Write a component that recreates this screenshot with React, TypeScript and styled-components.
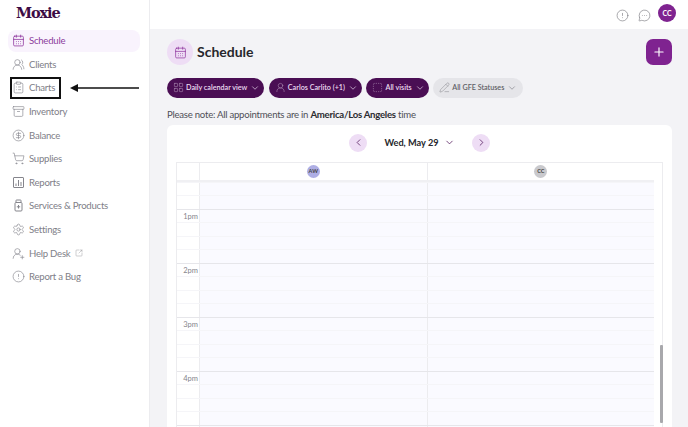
import React from "react";
import styled, { createGlobalStyle } from "styled-components";
import {
  Archive,
  CalendarDays,
  ChevronDown,
  ChevronLeft,
  ChevronRight,
  CircleAlert,
  CircleDollarSign,
  ClipboardList,
  LayoutGrid,
  MessageCircleMore,
  PencilLine,
  Plus,
  Settings,
  ShoppingCart,
  SquareArrowOutUpRight,
  SquareDashed,
  UserRound,
  UserRoundPlus,
  UsersRound,
} from "lucide-react";

const GlobalStyle = createGlobalStyle`
  * { box-sizing: border-box; }
  html, body { margin: 0; padding: 0; height: 100%; }
  body {
    font-family: "Lato", "Open Sans", sans-serif;
    background: #f3f3f6;
    overflow: hidden;
  }
`;

const Page = styled.div`
  position: relative;
  display: flex;
  width: 688px;
  height: 427px;
  overflow: hidden;
`;

const Sidebar = styled.aside`
  width: 150px;
  flex: none;
  background: #fff;
  border-right: 1px solid #ececef;
  padding: 5px 9px 0 8px;
`;

const Logo = styled.div`
  height: 25px;
  padding-left: 8px;
  font-family: "DejaVu Serif", serif;
  font-weight: 700;
  font-size: 14.5px;
  line-height: 15px;
  letter-spacing: -1.1px;
  color: #3d0c45;
`;

const NavList = styled.nav`
  display: flex;
  flex-direction: column;
  gap: 2px;
`;

const NavItem = styled.div<{ $active?: boolean }>`
  display: flex;
  align-items: center;
  gap: 4px;
  height: 21.6px;
  padding-left: 4px;
  border-radius: 8px;
  font-size: 9.6px;
  letter-spacing: -0.25px;
  background: ${(p) => (p.$active ? "#f9f3fd" : "transparent")};
  color: ${(p) => (p.$active ? "#8b3d9c" : "#808088")};
  svg {
    flex: none;
    color: ${(p) => (p.$active ? "#8b2e9b" : "#85858c")};
  }
`;

const LinkMark = styled.span`
  display: inline-flex;
  margin-left: 1px;
  color: #aaaab0;
`;

const HighlightBox = styled.div`
  position: absolute;
  left: 10px;
  top: 77px;
  width: 51px;
  height: 22px;
  border: 2px solid #111;
`;

const Arrow = styled.svg`
  position: absolute;
  left: 68px;
  top: 83px;
`;

const Main = styled.main`
  flex: 1;
  min-width: 0;
  display: flex;
  flex-direction: column;
`;

const TopBar = styled.header`
  height: 29px;
  flex: none;
  background: #fff;
  display: flex;
  align-items: center;
  gap: 9px;
  padding: 0 12px 0 0;
  justify-content: flex-end;
  color: #6f6f76;
`;

const Avatar = styled.div`
  width: 18px;
  height: 18px;
  margin-top: -3px;
  margin-left: -1.5px;
  border-radius: 50%;
  background: #7f2390;
  color: #fff;
  font-size: 7px;
  font-weight: 700;
  display: flex;
  align-items: center;
  justify-content: center;
`;

const TopIcon = styled.span`
  display: inline-flex;
  margin-top: 1px;
`;

const Content = styled.div`
  flex: 1;
  min-height: 0;
  padding: 10px 16px 0 17px;
  display: flex;
  flex-direction: column;
`;

const TitleRow = styled.div`
  display: flex;
  align-items: center;
  gap: 4px;
  height: 26px;
`;

const TitleBadge = styled.div`
  width: 26px;
  height: 26px;
  border-radius: 50%;
  background: #eeddf5;
  color: #8b2e9b;
  display: flex;
  align-items: center;
  justify-content: center;
`;

const Title = styled.h1`
  flex: 1;
  margin: 0 0 2px;
  font-size: 14px;
  font-weight: 700;
  color: #27272c;
`;

const AddButton = styled.button`
  width: 26px;
  height: 26px;
  padding: 0;
  border: 0;
  border-radius: 7px;
  background: #7f2390;
  color: #fff;
  display: flex;
  align-items: center;
  justify-content: center;
`;

const Filters = styled.div`
  display: flex;
  gap: 4.5px;
  margin-top: 12.5px;
`;

const Chip = styled.div<{ $muted?: boolean }>`
  height: 20px;
  display: flex;
  align-items: center;
  gap: 2px;
  padding: 0 ${(p) => (p.$muted ? "6px" : "4px")} 0 6px;
  border-radius: 10px;
  font-size: 7.2px;
  font-weight: 600;
  white-space: nowrap;
  background: ${(p) => (p.$muted ? "#e5e5e9" : "#4a0e54")};
  color: ${(p) => (p.$muted ? "#5f5f66" : "#ecdcf0")};
  svg:first-child {
    opacity: 0.7;
  }
  svg:last-child {
    margin-left: 1px;
  }
`;

const Note = styled.p`
  margin: 10px 0 0;
  height: 13px;
  font-size: 9.6px;
  letter-spacing: -0.25px;
  line-height: 13px;
  color: #4f4f56;
  b {
    color: #2b2b30;
    font-weight: 700;
  }
`;

const Card = styled.section`
  position: relative;
  flex: 1;
  min-height: 0;
  margin-top: 4px;
  background: #fff;
  border-radius: 6px 6px 0 0;
  padding: 6px 9px 0;
  overflow: hidden;
`;

const DateBar = styled.div`
  height: 24px;
  display: flex;
  align-items: center;
  justify-content: center;
  margin-bottom: 7px;
`;

const RoundNav = styled.button`
  width: 18px;
  height: 18px;
  padding: 0;
  border: 0;
  border-radius: 50%;
  background: #eeddf5;
  color: #4a0e54;
  display: flex;
  align-items: center;
  justify-content: center;
`;

const DateLabel = styled.div`
  width: 105px;
  display: flex;
  align-items: center;
  justify-content: center;
  gap: 5px;
  font-size: 9.2px;
  font-weight: 700;
  color: #27272c;
  svg {
    color: #4a0e54;
  }
`;

const Calendar = styled.div`
  width: 487px;
  border: 1px solid #ececef;
  border-bottom: 0;
`;

const HeaderRow = styled.div`
  display: grid;
  grid-template-columns: 22px 227.5px 227.5px;
  width: 477px;
  height: 19px;
  border-bottom: 2px solid #f0f0f3;
`;

const HeaderCell = styled.div`
  display: flex;
  align-items: center;
  justify-content: center;
  border-left: 1px solid #ececef;
  &:first-child {
    border-left: 0;
  }
`;

const Initials = styled.div<{ $bg: string }>`
  width: 13px;
  height: 13px;
  border-radius: 50%;
  background: ${(p) => p.$bg};
  color: #444;
  font-size: 5.5px;
  font-weight: 700;
  display: flex;
  align-items: center;
  justify-content: center;
`;

const Slot = styled.div<{ $hour?: boolean }>`
  display: grid;
  grid-template-columns: 22px 227.5px 227.5px;
  width: 477px;
  height: 13.5px;
  border-top: 1px solid ${(p) => (p.$hour ? "#e6e6ea" : "#f5f5f8")};
`;

const TimeCell = styled.div`
  font-size: 7.5px;
  line-height: 11px;
  padding-top: 1px;
  color: #85858c;
  text-align: right;
  padding-right: 1px;
  white-space: nowrap;
`;

const DayCell = styled.div`
  background: #fafaff;
  border-left: 1px solid #ececef;
`;

const ScrollThumb = styled.div`
  position: absolute;
  left: 493px;
  top: 220px;
  width: 3px;
  height: 78px;
  background: #a8a8ac;
  border-radius: 1px;
`;

const navItems = [
  { label: "Schedule", icon: <CalendarDays size={13} strokeWidth={1.4} />, active: true },
  { label: "Clients", icon: <UsersRound size={13} strokeWidth={1.2} /> },
  { label: "Charts", icon: <ClipboardList size={13} strokeWidth={1.2} /> },
  { label: "Inventory", icon: <Archive size={13} strokeWidth={1.2} /> },
  { label: "Balance", icon: <CircleDollarSign size={13} strokeWidth={1.2} /> },
  { label: "Supplies", icon: <ShoppingCart size={13} strokeWidth={1.2} /> },
  { label: "Reports", icon: <ReportsIcon /> },
  { label: "Services & Products", icon: <BottleIcon /> },
  { label: "Settings", icon: <Settings size={13} strokeWidth={1.2} /> },
  { label: "Help Desk", icon: <UserRoundPlus size={13} strokeWidth={1.2} />, external: true },
  { label: "Report a Bug", icon: <CircleAlert size={13} strokeWidth={1.2} /> },
];

function ReportsIcon() {
  return (
    <svg width="13" height="13" viewBox="0 0 13 13" fill="none" stroke="currentColor" strokeWidth="1">
      <rect x="1.5" y="1.5" width="10" height="10" rx="0.5" />
      <path d="M4 10V7.5M6.5 10V4M9 10V6" />
    </svg>
  );
}

function BottleIcon() {
  return (
    <svg width="13" height="13" viewBox="0 0 13 13" fill="none" stroke="currentColor" strokeWidth="1">
      <rect x="4" y="1" width="5" height="2.5" rx="0.5" />
      <rect x="3" y="3.5" width="7" height="8.5" rx="1" />
      <path d="M6.5 6v3.5M4.8 7.8h3.4" />
    </svg>
  );
}

// first row starts mid-hour, the 1pm line comes after two slots
const slots: { label?: string; hour?: boolean }[] = [];
slots.push({}, {});
["1pm", "2pm", "3pm", "4pm"].forEach((label) => {
  slots.push({ label, hour: true }, {}, {}, {});
});
slots.push({ hour: true });

export default function App() {
  return (
    <Page>
      <GlobalStyle />
      <Sidebar>
        <Logo>Moxie</Logo>
        <NavList>
          {navItems.map((item) => (
            <NavItem key={item.label} $active={item.active}>
              {item.icon}
              <span>{item.label}</span>
              {item.external && (
                <LinkMark>
                  <SquareArrowOutUpRight size={8} strokeWidth={1.2} />
                </LinkMark>
              )}
            </NavItem>
          ))}
        </NavList>
      </Sidebar>
      <HighlightBox />
      <Arrow width="72" height="10" viewBox="0 0 72 10">
        <path d="M2 5L10 1V9Z" fill="#111" />
        <path d="M8 5H71" stroke="#111" strokeWidth="1.5" />
      </Arrow>
      <Main>
        <TopBar>
          <TopIcon>
            <CircleAlert size={13} strokeWidth={1.1} />
          </TopIcon>
          <TopIcon>
            <MessageCircleMore size={13} strokeWidth={1.1} />
          </TopIcon>
          <Avatar>CC</Avatar>
        </TopBar>
        <Content>
          <TitleRow>
            <TitleBadge>
              <CalendarDays size={13} strokeWidth={1.3} />
            </TitleBadge>
            <Title>Schedule</Title>
            <AddButton>
              <Plus size={14} strokeWidth={2} />
            </AddButton>
          </TitleRow>
          <Filters>
            <Chip>
              <LayoutGrid size={11} strokeWidth={1.1} />
              Daily calendar view
              <ChevronDown size={10} strokeWidth={1.6} />
            </Chip>
            <Chip>
              <UserRound size={11} strokeWidth={1.1} />
              Carlos Carlito (+1)
              <ChevronDown size={10} strokeWidth={1.6} />
            </Chip>
            <Chip>
              <SquareDashed size={11} strokeWidth={1.1} />
              All visits
              <ChevronDown size={10} strokeWidth={1.6} />
            </Chip>
            <Chip $muted>
              <PencilLine size={11} strokeWidth={1.1} />
              All GFE Statuses
              <ChevronDown size={10} strokeWidth={1.2} />
            </Chip>
          </Filters>
          <Note>
            Please note: All appointments are in <b>America/Los Angeles</b> time
          </Note>
          <Card>
            <DateBar>
              <RoundNav>
                <ChevronLeft size={11} strokeWidth={1.6} />
              </RoundNav>
              <DateLabel>
                Wed, May 29
                <ChevronDown size={11} strokeWidth={1.6} />
              </DateLabel>
              <RoundNav>
                <ChevronRight size={11} strokeWidth={1.6} />
              </RoundNav>
            </DateBar>
            <Calendar>
              <HeaderRow>
                <HeaderCell />
                <HeaderCell>
                  <Initials $bg="#aeaee4">AW</Initials>
                </HeaderCell>
                <HeaderCell>
                  <Initials $bg="#c9c9cd">CC</Initials>
                </HeaderCell>
              </HeaderRow>
              {slots.map((slot, i) => (
                <Slot key={i} $hour={slot.hour}>
                  <TimeCell>{slot.label}</TimeCell>
                  <DayCell />
                  <DayCell />
                </Slot>
              ))}
            </Calendar>
            <ScrollThumb />
          </Card>
        </Content>
      </Main>
    </Page>
  );
}
